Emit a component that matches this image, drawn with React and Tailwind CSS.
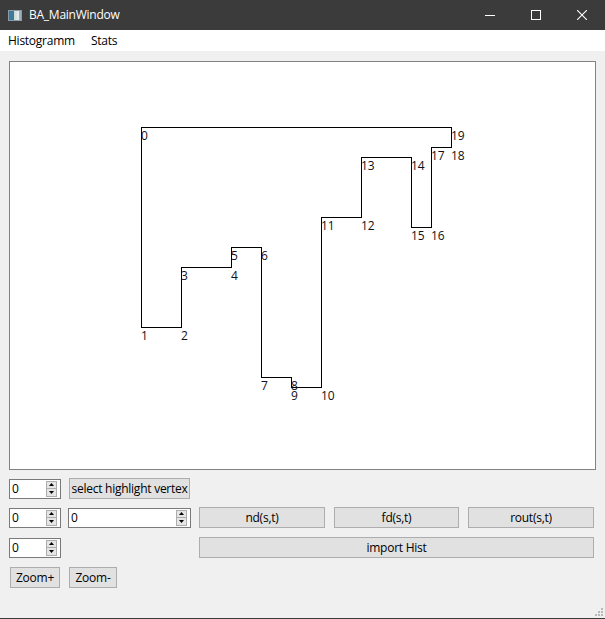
import React from "react";

const pts = [
  [141, 127], [141, 327], [181, 327], [181, 267], [231, 267], [231, 247],
  [261, 247], [261, 377], [291, 377], [291, 387], [321, 387], [321, 217],
  [361, 217], [361, 157], [411, 157], [411, 227], [431, 227], [431, 147],
  [451, 147], [451, 127],
];

function Spin({ w = "w-[52px]", value = "0" }) {
  return (
    <div className={`${w} h-[20px] bg-white border border-[#7a7a7a] flex items-center justify-between`}>
      <span className="pl-[2px] text-[12px] leading-none text-black">{value}</span>
      <div className="flex flex-col h-full py-[1px] pr-[3px]">
        <div className="w-[11px] h-[9px] bg-[#e5e5e5] border border-[#adadad] flex items-center justify-center">
          <svg width="5" height="3" viewBox="0 0 5 3"><path d="M2.5 0 L5 3 L0 3 Z" fill="#000" /></svg>
        </div>
        <div className="w-[11px] h-[9px] bg-[#e5e5e5] border border-[#adadad] border-t-0 flex items-center justify-center">
          <svg width="5" height="3" viewBox="0 0 5 3"><path d="M0 0 L5 0 L2.5 3 Z" fill="#000" /></svg>
        </div>
      </div>
    </div>
  );
}

function Btn({ className = "", children }) {
  return (
    <div className={`h-[21px] bg-[#e1e1e1] border border-[#adadad] flex items-center justify-center whitespace-nowrap text-[12px] tracking-[-0.25px] text-black ${className}`}>
      {children}
    </div>
  );
}

export default function App() {
  return (
    <div className="w-[605px] h-[619px] flex flex-col bg-[#f0f0f0] overflow-hidden" style={{ fontFamily: "'Open Sans', 'Noto Sans', sans-serif" }}>
      {/* title bar */}
      <div className="h-[30px] bg-[#3b3b3b] flex items-center text-white shrink-0">
        <div className="ml-[8px] w-[14px] h-[11px] flex border border-[#8a9aa8]">
          <div className="w-[5px] bg-[#3e7a9c]" />
          <div className="flex-1 bg-gradient-to-r from-[#cfd9d0] to-[#e8eef0]" />
          <div className="w-[2px] bg-[#9bb0bd]" />
        </div>
        <span className="ml-[7px] text-[12px] tracking-[-0.25px]">BA_MainWindow</span>
        <div className="ml-auto flex items-center h-full">
          <div className="w-[46px] h-full flex items-center justify-center">
            <div className="w-[10px] h-[1px] bg-white" />
          </div>
          <div className="w-[46px] h-full flex items-center justify-center">
            <div className="w-[10px] h-[10px] border border-white" />
          </div>
          <div className="w-[46px] h-full flex items-center justify-center">
            <svg width="10" height="10" viewBox="0 0 10 10"><path d="M0 0 L10 10 M10 0 L0 10" stroke="#fff" strokeWidth="1.1" /></svg>
          </div>
        </div>
      </div>
      {/* menu */}
      <div className="h-[21px] bg-white flex items-center text-[12px] tracking-[-0.25px] text-black shrink-0">
        <span className="ml-[8px]">Histogramm</span>
        <span className="ml-[16px]">Stats</span>
      </div>
      {/* body */}
      <div className="flex-1 flex flex-col pl-[9px] pt-[10px] relative">
        <div className="w-[587px] h-[409px] bg-white border border-[#828282]">
          <svg width="585" height="407" viewBox="10 62 585 407" shapeRendering="crispEdges">
            <polygon
              points={pts.map(([x, y]) => `${x + 0.5},${y + 0.5}`).join(" ")}
              fill="none"
              stroke="#000"
              strokeWidth="1"
            />
            {pts.map(([x, y], i) => (
              <text key={i} x={x} y={y + 13} fontSize="12" fill="#101018" fontFamily="'Open Sans', 'Noto Sans', sans-serif" shapeRendering="auto">
                {i}
              </text>
            ))}
          </svg>
        </div>
        <div className="flex items-center mt-[8px] h-[21px]">
          <Spin />
          <Btn className="ml-[8px] w-[121px]">select highlight vertex</Btn>
        </div>
        <div className="flex items-center mt-[8px] h-[21px]">
          <Spin />
          <div className="ml-[7px]"><Spin w="w-[123px]" /></div>
          <Btn className="ml-[8px] w-[126px]">nd(s,t)</Btn>
          <Btn className="ml-[9px] w-[125px]">fd(s,t)</Btn>
          <Btn className="ml-[9px] w-[126px]">rout(s,t)</Btn>
        </div>
        <div className="flex items-center mt-[9px] h-[21px]">
          <Spin />
          <Btn className="ml-[138px] w-[395px]">import Hist</Btn>
        </div>
        <div className="flex items-center mt-[9px]">
          <Btn className="ml-[1px] w-[50px] h-[20px]">Zoom+</Btn>
          <Btn className="ml-[9px] w-[48px] h-[20px]">Zoom-</Btn>
        </div>
        <svg className="absolute right-[2px] bottom-[2px]" width="10" height="10" viewBox="0 0 10 10">
          {[[8, 0], [8, 3], [5, 3], [8, 6], [5, 6], [2, 6]].map(([x, y], i) => (
            <rect key={i} x={x} y={y + 2} width="2" height="2" fill="#b8b8b8" />
          ))}
        </svg>
      </div>
      <div className="h-[1px] bg-[#3b3b3b] shrink-0" />
    </div>
  );
}
